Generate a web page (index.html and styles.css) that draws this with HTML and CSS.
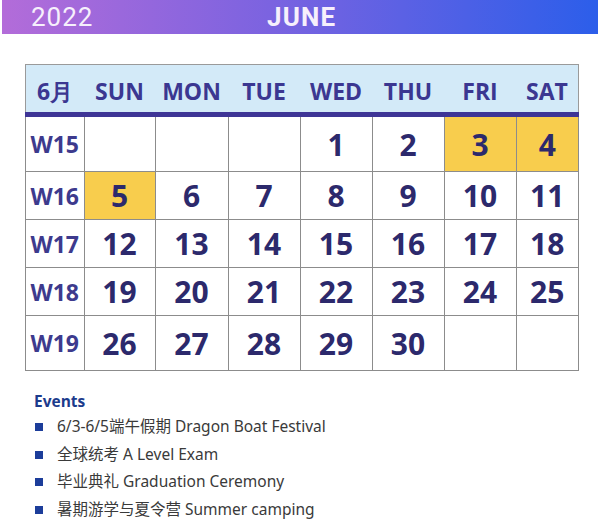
FILE: index.html
```html
<!DOCTYPE html>
<html lang="en">
<head>
    <meta charset="UTF-8">
    <meta name="viewport" content="width=device-width, initial-scale=1.0">
    <title>June 2022</title>
    <link rel="stylesheet" href="styles.css">
</head>
<body>
    <div class="banner">
        <span class="year">2022</span>
        <span class="month">JUNE</span>
    </div>

    <table class="calendar">
        <thead>
            <tr>
                <th class="wk">6月</th>
                <th>SUN</th>
                <th>MON</th>
                <th>TUE</th>
                <th>WED</th>
                <th>THU</th>
                <th>FRI</th>
                <th>SAT</th>
            </tr>
        </thead>
        <tbody>
            <tr class="first">
                <td class="wk">W15</td>
                <td></td><td></td><td></td>
                <td>1</td><td>2</td>
                <td class="hol">3</td><td class="hol">4</td>
            </tr>
            <tr>
                <td class="wk">W16</td>
                <td class="hol">5</td><td>6</td><td>7</td><td>8</td><td>9</td><td>10</td><td>11</td>
            </tr>
            <tr>
                <td class="wk">W17</td>
                <td>12</td><td>13</td><td>14</td><td>15</td><td>16</td><td>17</td><td>18</td>
            </tr>
            <tr>
                <td class="wk">W18</td>
                <td>19</td><td>20</td><td>21</td><td>22</td><td>23</td><td>24</td><td>25</td>
            </tr>
            <tr class="last">
                <td class="wk">W19</td>
                <td>26</td><td>27</td><td>28</td><td>29</td><td>30</td><td></td><td></td>
            </tr>
        </tbody>
    </table>

    <div class="events">
        <h3>Events</h3>
        <ul>
            <li>6/3-6/5端午假期 Dragon Boat Festival</li>
            <li>全球统考 A Level Exam</li>
            <li>毕业典礼 Graduation Ceremony</li>
            <li>暑期游学与夏令营 Summer camping</li>
        </ul>
    </div>
</body>
</html>
```

FILE: styles.css
```css
body {
    margin: 0;
    background: #ffffff;
    font-family: "Open Sans", "Noto Sans", sans-serif;
}
.banner {
    margin: 0 2px;
    height: 34px;
    background: linear-gradient(90deg, #b36cd9 0%, #7b63e0 45%, #2c5eea 100%);
    position: relative;
    font-family: Roboto, sans-serif;
    color: #f6f0fc;
}
.year {
    position: absolute;
    left: 29px;
    top: 2px;
    font-size: 26px;
    font-weight: 400;
    letter-spacing: 1px;
}
.month {
    position: absolute;
    left: 265px;
    top: 2px;
    font-size: 26px;
    font-weight: 700;
    letter-spacing: 1.2px;
}
.calendar {
    margin: 30px 0 0 25px;
    border-collapse: collapse;
    table-layout: fixed;
    width: 554px;
}
.calendar th {
    height: 42px;
    background: #d3eaf8;
    color: #3b3791;
    font-size: 23px;
    font-weight: 700;
    text-align: center;
    padding: 5px 0 0;
    border-top: 1px solid #9a9a9a;
    border-bottom: 5px solid #3e3596;
}
.calendar th:first-child {
    border-left: 1px solid #9a9a9a;
    width: 58px;
}
.calendar th:nth-child(2) { width: 71px; }
.calendar th:nth-child(3) { width: 73px; }
.calendar th:nth-child(8) {
    border-right: 1px solid #9a9a9a;
    width: 62px;
}
.calendar td {
    height: 47px;
    border: 1px solid #8c8c8c;
    text-align: center;
    color: #2c296c;
    font-size: 30px;
    font-weight: 700;
    padding: 0;
}
.calendar tr.first td {
    height: 54px;
}
.calendar tr.last td {
    height: 54px;
}
.calendar td.wk {
    color: #3d3a8d;
    font-size: 23px;
}
.calendar td.hol {
    background: #f8cd4d;
}
.events {
    margin: 19px 0 0 34px;
}
.events h3 {
    margin: 0;
    font-size: 15.5px;
    font-weight: 700;
    color: #1c3b8c;
    line-height: 22px;
}
.events ul {
    list-style: none;
    margin: 1px 0 0;
    padding: 0;
}
.events li {
    font-family: "Noto Sans", "Noto Sans CJK SC", sans-serif;
    font-size: 15.5px;
    color: #3a3a3a;
    line-height: 27.7px;
    padding-left: 23px;
    position: relative;
}
.events li::before {
    content: "";
    position: absolute;
    left: 1px;
    top: 10px;
    width: 8px;
    height: 8px;
    background: #1c3d9a;
}
```
